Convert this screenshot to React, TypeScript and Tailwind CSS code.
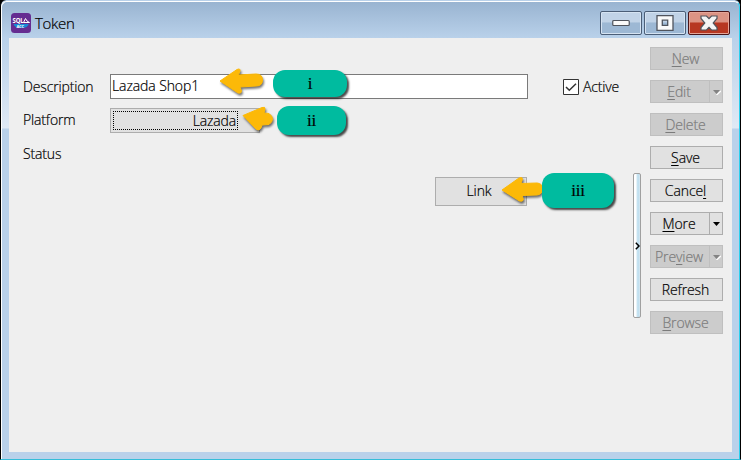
import React from "react";

type SideItem = { pre: string; key: string; post: string; off?: boolean; menu?: boolean };

const items: SideItem[] = [
  { pre: "", key: "N", post: "ew", off: true },
  { pre: "", key: "E", post: "dit", off: true, menu: true },
  { pre: "", key: "D", post: "elete", off: true },
  { pre: "", key: "S", post: "ave" },
  { pre: "Cance", key: "l", post: "" },
  { pre: "", key: "M", post: "ore", menu: true },
  { pre: "Pre", key: "v", post: "iew", off: true, menu: true },
  { pre: "Refresh", key: "", post: "" },
  { pre: "", key: "B", post: "rowse", off: true },
];

function SideButton({ item }: { item: SideItem }) {
  const tone = item.off
    ? "bg-[#cccccc] border-[#bfbfbf] text-[#7b7b7b]"
    : "bg-[#e1e1e1] border-[#adadad] text-black";
  return (
    <button className={`flex h-[23px] w-[73px] shrink-0 border text-[14px] leading-[21px] tracking-[-0.1px] ${tone}`}>
      <span className={`flex-1 text-center ${item.menu ? "pr-[2px]" : "pr-[2px]"}`}>
        {item.pre}
        {item.key && <span className="underline decoration-1 underline-offset-2">{item.key}</span>}
        {item.post}
      </span>
      {item.menu && (
        <span className={`flex h-full w-[13px] items-center justify-center border-l ${item.off ? "border-[#bfbfbf]" : "border-[#adadad]"}`}>
          <svg width="9" height="6" viewBox="0 0 9 6">
            {item.off && <path d="M4.5 6L9 2" stroke="#fff" strokeWidth="1.3" fill="none" />}
            <path d="M1 1h7L4.5 5z" fill={item.off ? "#838383" : "#000"} />
          </svg>
        </span>
      )}
    </button>
  );
}

function Arrow({ className, d }: { className: string; d: string }) {
  return (
    <svg className={`absolute overflow-visible drop-shadow-[1px_2px_1px_rgba(0,0,0,0.55)] ${className}`} width="46" height="28" viewBox="0 0 46 28">
      <path d={d} fill="#fcb908" stroke="#fcb908" strokeWidth="1" strokeLinejoin="round" />
    </svg>
  );
}

function Badge({ className, children }: { className: string; children: React.ReactNode }) {
  return (
    <div className={`absolute flex items-center justify-center rounded-[12px] bg-[#00bb9f] font-['Liberation_Serif',serif] text-[17px] text-black shadow-[2px_2px_2px_0px_rgba(0,0,0,0.7)] ${className}`}>
      {children}
    </div>
  );
}

export default function App() {
  return (
    <div className="relative h-[460px] w-[741px] overflow-hidden bg-black font-['Open_Sans','Noto_Sans',sans-serif] text-[14px] font-light tracking-[-0.15px] text-black [-webkit-text-stroke:0.2px]">
      <div className="flex h-[460px] flex-col rounded-t-[6px] border-x border-b border-r-black border-b-[#35bdd8] border-l-black bg-[#b9d1ea] pt-px">
        <div className="flex h-[459px] flex-col rounded-t-[6px] border-r border-l border-t border-t-white border-l-white border-r-[#2bd0ee] bg-[linear-gradient(#99b4d1_0px,#b9d1ea_36px,#c3d7ec_60px,#dfe9f5_126px,#b9d1ea_127px)] px-[7px] pb-[7px]">
          <header className="flex h-9 shrink-0 items-start">
            <svg className="mt-[11px] ml-[2px]" width="20" height="20" viewBox="0 0 20 20">
              <rect width="20" height="20" rx="3.5" fill="#652c91" />
              <text x="1.5" y="10" fontSize="6.5" fontWeight="bold" fill="#fff" fontFamily="Open Sans" textLength="11" lengthAdjust="spacingAndGlyphs">SQL</text>
              <path d="M12.500 9.500l2-4q1 3 4 4z" fill="none" stroke="#fff" />
              <path d="M2.5 11h15v1q-2 3-5 3H7.5q-4-1-5-4z" fill="#1689d5" />
              <text x="5.5" y="14.5" fontSize="4" fontWeight="bold" fill="#fff" fontFamily="Open Sans">ACC</text>
            </svg>
            <span className="mt-[11px] ml-1 text-[15px] leading-[20px] tracking-[-0.3px]">Token</span>
            <div className="mt-[9px] mr-0.5 ml-auto flex gap-[2px]">
              <div className="flex h-6 w-[42px] items-center justify-center rounded-[2px] border border-[#4b5e77] bg-linear-to-b from-[#c1d3e7] from-45% to-[#9db8d4] to-50% shadow-[inset_0_0_0_1px_#d5e3f2]">
                <svg width="18" height="8"><rect x=".75" y="1.5" width="16.5" height="5" rx="1" fill="#fafafa" stroke="#50545d" strokeWidth="1.2" /></svg>
              </div>
              <div className="flex h-6 w-[42px] items-center justify-center rounded-[2px] border border-[#4b5e77] bg-linear-to-b from-[#c1d3e7] from-45% to-[#9db8d4] to-50% shadow-[inset_0_0_0_1px_#d5e3f2]">
                <svg width="18" height="16"><path d="M1 .7h16v14.6H1zM6.3 5.2h5.4v5.2H6.3z" fillRule="evenodd" fill="#fafafa" stroke="#50545d" strokeWidth="1.3" /></svg>
              </div>
              <div className="flex h-6 w-[42px] items-center justify-center rounded-[2px] border border-[#4a1519] bg-linear-to-b from-[#dc9384] from-45% to-[#b73722] to-50% shadow-[inset_0_0_0_1px_#e5a598]">
                <svg width="18" height="16"><path d="M1 1h5.5L9 3.7 11.500 1H17v2.500L13.200 8 17 12.500V15h-5.500L9 12.300 6.500 15H1v-2.500L4.800 8 1 3.500z" fill="#f5f5f5" stroke="#50545d" strokeWidth="1.2" /></svg>
              </div>
            </div>
          </header>

          <main className="flex min-h-0 flex-1 bg-[#efefef]">
            <section className="w-[624px] pt-9 pl-[14px]">
              <div className="flex h-[25px] items-center">
                <label className="w-[87px] shrink-0">Description</label>
                <div className="h-[25px] w-[418px] border border-[#7a7a7a] bg-white pl-px leading-[22px] tracking-[-0.1px]">Lazada Shop1</div>
                <div className="ml-[35px] flex items-center">
                  <svg width="16" height="16" viewBox="0 0 16 16"><path d="M.5.5h15v15H.5z" fill="#fff" stroke="#333" /><path d="M3 8l3.3 3.3L13 4.7" fill="none" stroke="#333" strokeWidth="1.5" /></svg>
                  <span className="ml-1">Active</span>
                </div>
              </div>
              <div className="mt-[9px] flex h-[25px] items-center">
                <label className="w-[87px] shrink-0 pb-0.5">Platform</label>
                <div className="h-[25px] w-[150px] border border-[#adadad] bg-[#e1e1e1] p-[2px]">
                  <div className="h-[19px] w-[125px] border border-dotted border-black pr-px text-right leading-[17px]">Lazada</div>
                </div>
              </div>
              <div className="mt-2 flex h-[25px] items-center">Status</div>
              <button className="mt-[11px] ml-[412px] flex h-[29px] w-[92px] items-center justify-center border border-[#adadad] bg-[#e1e1e1] pr-1 pb-[2px]">Link</button>
            </section>
            <div className="mt-[135px] flex h-[145px] w-2 items-center justify-center rounded-[2px] border border-[#a0a0a0] bg-[linear-gradient(90deg,#fff_30%,#b8dcee_65%,#d8e8f2)]">
              <svg width="5" height="8" viewBox="0 0 5 8"><path d="M.8.8L4 4 .8 7.2" fill="none" stroke="#000" strokeWidth="1.5" /></svg>
            </div>
            <aside className="ml-[9px] flex flex-col gap-[10px] pt-[9px]">
              {items.map((item) => <SideButton key={item.pre + item.key + item.post} item={item} />)}
            </aside>
          </main>
        </div>
      </div>
      <Arrow className="top-[67px] left-[219px]" d="M1 14L18 2.500q3.500-1.500 3 1.500l-1.500 4L37 7q6.500 0 6.500 6T37 19l-16 1 1.500 4q0 3-3.500 2z" />
      <Arrow className="top-[105px] left-[242px]" d="M1 10.500L20 2.500q3.500-1 3 1.500l-1 4 5 .5q3.500 2.500 3.500 5.500t-3.500 5.500l-7 .5-1 3q-1.500 3-4.500 1.500z" />
      <Arrow className="top-[175px] left-[501px]" d="M1 15L18 3q3.500-1.500 3.500 1L20 8.500l16-.5q5.500.5 5.500 5.500 0 6-5.500 6.500l-15 .5 1.500 4q-.5 2.500-4 1.500z" />
      <Badge className="top-[70px] left-[273px] h-[27px] w-[74px]">i</Badge>
      <Badge className="top-[106px] left-[277px] h-[29px] w-[69px]">ii</Badge>
      <Badge className="top-[173px] left-[542px] h-[35px] w-[72px]">iii</Badge>
    </div>
  );
}
